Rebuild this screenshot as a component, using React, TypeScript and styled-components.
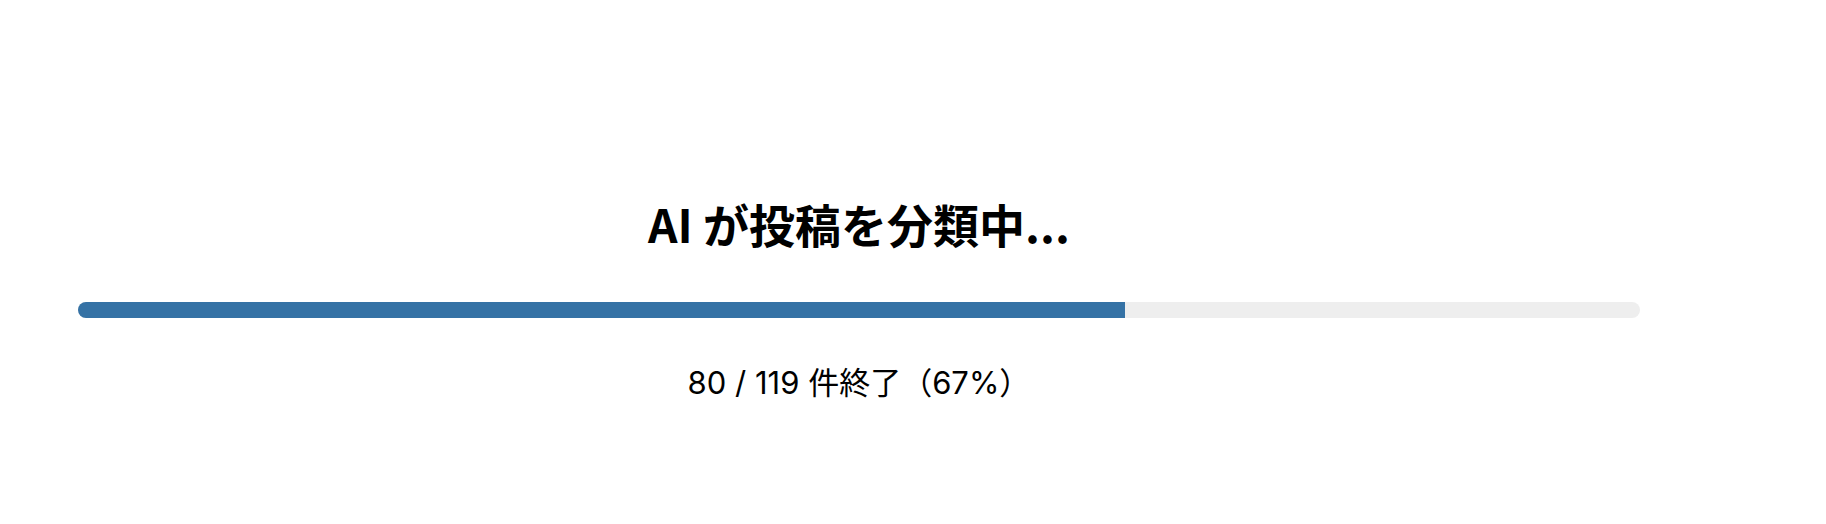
import React from "react";
import styled, { createGlobalStyle } from "styled-components";

const GlobalStyle = createGlobalStyle`
  html, body {
    margin: 0;
    padding: 0;
    background: #ffffff;
  }
  body {
    font-family: "Noto Sans CJK JP", "Noto Sans", sans-serif;
    color: #000000;
  }
`;

const Page = styled.main`
  box-sizing: border-box;
  width: 1826px;
  height: 524px;
  padding: 196px 186px 0 78px;
`;

const Panel = styled.section`
  display: flex;
  flex-direction: column;
  align-items: stretch;
`;

const Title = styled.h2`
  margin: 0 0 51px;
  font-size: 46px;
  line-height: 1.2;
  font-weight: 700;
  text-align: center;
  color: #000000;
`;

const Track = styled.div`
  height: 16px;
  border-radius: 8px;
  background: #eeeeee;
  overflow: hidden;
  display: flex;
`;

const Fill = styled.div`
  height: 100%;
  background: #3572a5;
`;

const Status = styled.p`
  margin: 46px 0 0;
  font-family: "Inter", "Noto Sans CJK JP", sans-serif;
  font-size: 31px;
  line-height: 1.2;
  font-weight: 400;
  text-align: center;
  color: #000000;
`;

export default function App() {
  const done = 80;
  const total = 119;
  const pct = Math.round((done / total) * 100);
  return (
    <>
      <GlobalStyle />
      <Page>
        <Panel>
          <Title>AI が投稿を分類中...</Title>
          <Track>
            <Fill style={{ width: `${pct}%` }} />
          </Track>
          <Status>
            {done} / {total} 件終了（{pct}%）
          </Status>
        </Panel>
      </Page>
    </>
  );
}
